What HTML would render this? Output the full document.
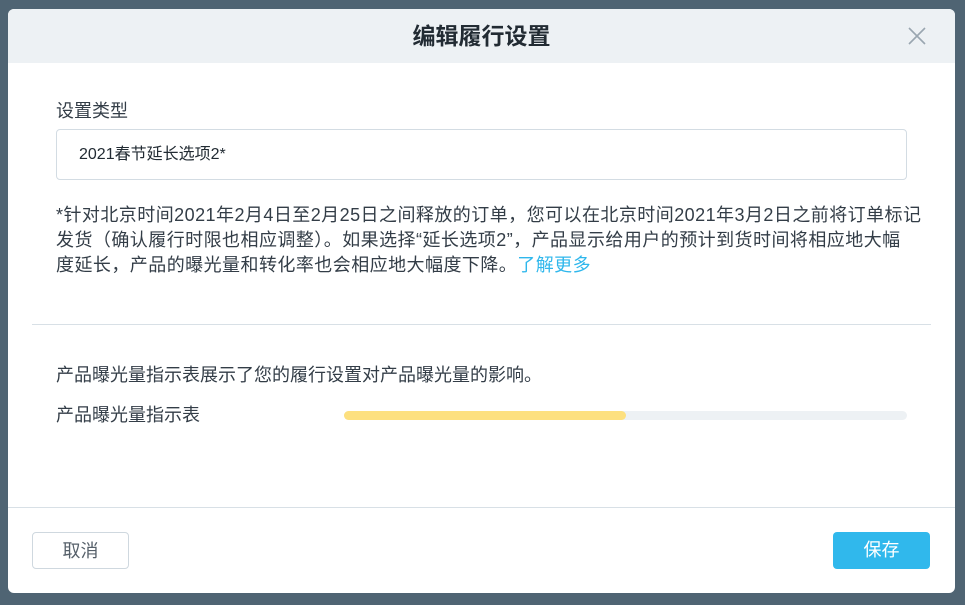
<!DOCTYPE html>
<html><head><meta charset="utf-8"><style>
*{margin:0;padding:0;box-sizing:border-box}
body{width:965px;height:605px;background:#4f6473;font-family:"Liberation Sans","Noto Sans CJK SC",sans-serif;position:relative;overflow:hidden;color:#333d47}
.dlg{position:absolute;left:8px;top:9px;width:947px;height:584px;background:#fff;border-radius:6px;overflow:hidden}
.hd{height:54px;background:#edf1f4;text-align:center;font-size:23px;font-weight:bold;line-height:54px;color:#222b33}
.x{position:absolute;left:900px;top:18px;width:18px;height:18px}
.abs{position:absolute;white-space:nowrap;font-size:18px;line-height:24px}
.inp{position:absolute;left:48px;top:120px;width:851px;height:51px;border:1px solid #d3dce3;border-radius:4px;font-size:16px;line-height:49px;padding-left:22px;color:#222b33}
.p{position:absolute;left:48px;top:194px;font-size:18px;line-height:25px;white-space:nowrap;color:#333d47;letter-spacing:0.45px}
.hr{position:absolute;left:24px;width:899px;height:1px;background:#d8e0e6}
.bar{position:absolute;left:336px;top:402px;width:563px;height:9px;border-radius:5px;background:#edf1f4}
.bar i{display:block;width:282px;height:9px;border-radius:5px;background:#fde07f}
.btn{position:absolute;top:523px;width:97px;height:37px;border-radius:4px;font-size:18px;line-height:37px;text-align:center}
</style></head><body>
<div class="dlg">
<div class="hd">编辑履行设置</div>
<svg class="x" viewBox="0 0 18 18"><path d="M1 1L17 17M17 1L1 17" stroke="#9aa6b0" stroke-width="1.6"/></svg>
<div class="abs" style="left:48px;top:90px">设置类型</div>
<div class="inp">2021春节延长选项2*</div>
<div class="p">*针对北京时间2021年2月4日至2月25日之间释放的订单，您可以在北京时间2021年3月2日之前将订单标记<br>发货（确认履行时限也相应调整）。如果选择“延长选项2”，产品显示给用户的预计到货时间将相应地大幅<br>度延长，产品的曝光量和转化率也会相应地大幅度下降。<span style="color:#2fb7ec">了解更多</span></div>
<div class="hr" style="top:315px"></div>
<div class="abs" style="left:48px;top:354px">产品曝光量指示表展示了您的履行设置对产品曝光量的影响。</div>
<div class="abs" style="left:48px;top:394px">产品曝光量指示表</div>
<div class="bar"><i></i></div>
<div class="hr" style="top:498px;left:0;width:947px"></div>
<div class="btn" style="left:24px;border:1px solid #cfd8df;color:#555f69">取消</div>
<div class="btn" style="left:825px;background:#30b8ec;color:#fff">保存</div>
</div>
</body></html>
